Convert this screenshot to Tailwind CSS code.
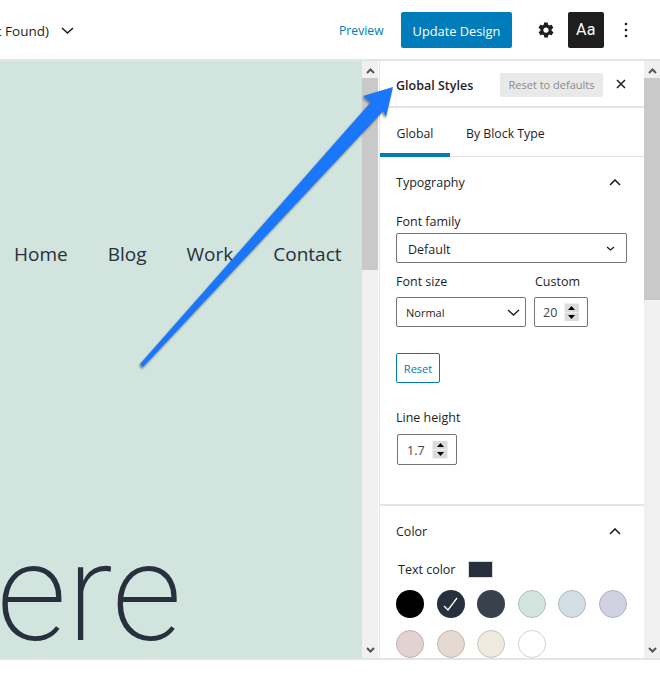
<!DOCTYPE html>
<html lang="en">
<head>
<meta charset="utf-8">
<script src="https://cdn.jsdelivr.net/npm/@tailwindcss/browser@4"></script>
</head>
<body class="bg-white">
<div class="relative w-[660px] h-[684px] overflow-hidden bg-white text-[#1e1e1e] font-['Open_Sans','Noto_Sans',sans-serif] text-[13px]">
  <header class="h-[61px] flex items-center border-b-2 border-[#e2e4e7]">
    <div class="w-[49px] overflow-hidden flex justify-end whitespace-nowrap text-[13.5px] pt-[4px]"><span>Not Found)</span></div>
    <svg class="ml-[12px] mt-[2px]" width="13" height="8" viewBox="0 0 13 8" fill="none" stroke="#1e1e1e" stroke-width="1.6"><path d="M1 1l5.500 5L12 1"/></svg>
    <span class="ml-[265px] text-[#007cba] text-[12.2px] w-[62px] pt-[3px]">Preview</span>
    <div class="w-[111px] h-9 bg-[#007cba] rounded-[2px] text-white text-[12.8px] flex items-center justify-center pt-[4px]">Update Design</div>
    <svg class="ml-[25px]" width="18" height="18" viewBox="0 0 24 24" fill="#1e1e1e"><path fill-rule="evenodd" d="M19.4 13c.1-.3.1-.7.1-1s0-.7-.1-1l2.100-1.600c.2-.2.2-.4.1-.6l-2-3.500c-.1-.2-.4-.3-.6-.2l-2.500 1c-.5-.4-1.100-.7-1.700-1l-.4-2.600c0-.3-.2-.5-.5-.5h-4c-.3 0-.5.2-.5.4l-.4 2.700c-.6.2-1.200.6-1.700 1l-2.500-1c-.2-.1-.5 0-.6.2l-2 3.500c-.1.2-.1.5.1.6L4.600 11c-.1.3-.1.7-.1 1s0 .7.1 1l-2.100 1.600c-.2.2-.2.4-.1.6l2 3.500c.1.2.4.3.6.2l2.500-1c.5.4 1.100.7 1.700 1l.4 2.600c0 .3.2.5.5.5h4c.3 0 .5-.2.5-.4l.4-2.700c.6-.2 1.200-.6 1.700-1l2.500 1c.2.1.5 0 .6-.2l2-3.500c.1-.2.1-.5-.1-.6L19.400 13zM12 15.500a3.500 3.500 0 1 1 0-7 3.500 3.500 0 0 1 0 7z"/></svg>
    <div class="ml-[13px] w-9 h-9 bg-[#1e1e1e] rounded-[2px] text-white flex items-center justify-center text-[16px] font-normal tracking-[0.5px] font-['Roboto',sans-serif]">Aa</div>
    <svg class="ml-[20px]" width="4" height="16" viewBox="0 0 4 16" fill="#1e1e1e"><circle cx="2" cy="2" r="1.300"/><circle cx="2" cy="8" r="1.300"/><circle cx="2" cy="14" r="1.300"/></svg>
  </header>

  <main class="h-[599px] flex border-b-2 border-[#e2e4e7]">
    <section class="w-[362px] bg-[#d1e4dd] overflow-hidden flex flex-col">
      <nav class="mt-[179px] ml-[14px] flex gap-[40px] text-[19px] text-[#28303d] whitespace-nowrap h-[28px] items-center">
        <span>Home</span><span>Blog</span><span>Work</span><span>Contact</span>
      </nav>
      <div class="mt-[252px] flex justify-end w-[182px] overflow-hidden text-[138px] leading-[146px] font-extralight font-['Roboto',sans-serif] text-[#28303d] whitespace-nowrap"><span>here</span></div>
    </section>

    <div class="w-4 flex flex-col bg-[#f0f0f0]">
      <div class="h-[17px] flex items-center justify-center pt-[2px]"><svg width="9" height="6" viewBox="0 0 9 6" fill="none" stroke="#555" stroke-width="2"><path d="M1 5l3.500-3.500L8 5"/></svg></div>
      <div class="h-[192px] bg-[#c9c9c9]"></div>
      <div class="flex-1 flex items-end justify-center pb-[5px]"><svg width="9" height="6" viewBox="0 0 9 6" fill="none" stroke="#555" stroke-width="2"><path d="M1 1l3.500 3.500L8 1"/></svg></div>
    </div>

    <aside class="ml-[1px] w-[265px] border-l border-[#e2e4e7] overflow-hidden">
      <div class="h-[47px] border-b-2 border-[#e2e4e7] flex items-center pl-[16px] pt-[2px]">
        <span class="font-[550] text-[12.5px] w-[104px] pt-[3px]">Global Styles</span>
        <span class="w-[103px] h-6 bg-[#e9e9e9] rounded-[2px] text-[#8a8a8a] text-[11px] flex items-center justify-center pt-[1px]">Reset to defaults</span>
        <svg class="ml-[13px] -mt-[1px]" width="10" height="10" viewBox="0 0 10 10" fill="none" stroke="#1e1e1e" stroke-width="1.500"><path d="M1 1l8 8M9 1l-8 8"/></svg>
      </div>
      <div class="h-[49px] border-b border-[#e2e4e7] flex text-[12.3px]">
        <div class="w-[70px] h-[49px] border-b-[4px] border-[#007cba] flex items-center justify-center pt-[7px]">Global</div>
        <div class="ml-[16px] h-[49px] flex items-center pt-[3px]">By Block Type</div>
      </div>

      <div class="h-[349px] border-b-2 border-[#e2e4e7] pl-[16px] flex flex-col">
        <div class="h-[50px] flex items-center justify-between pr-[23px] text-[12.5px]">
          <span class="pt-[3px]">Typography</span>
          <svg width="12" height="7" viewBox="0 0 12 7" fill="none" stroke="#1e1e1e" stroke-width="1.600"><path d="M1 6l5-5 5 5"/></svg>
        </div>
        <label class="mt-[6px] h-[18px] leading-[18px] text-[12.5px]">Font family</label>
        <div class="mt-[2px] w-[231px] h-[30px] border border-[#757575] rounded-[2px] flex items-center justify-between pl-[11px] pr-[11px] text-[12.5px]">
          <span class="pt-[4px]">Default</span>
          <svg width="9" height="5" viewBox="0 0 9 5" fill="none" stroke="#1e1e1e" stroke-width="1.300"><path d="M1 1l3.500 3L8 1"/></svg>
        </div>
        <div class="mt-[10px] flex h-[18px] leading-[18px] text-[12.5px]">
          <span class="w-[139px]">Font size</span><span>Custom</span>
        </div>
        <div class="mt-[6px] flex">
          <div class="w-[130px] h-[30px] border border-[#757575] rounded-[2px] flex items-center justify-between pl-[9px] pr-[5px] text-[11px] font-medium">
            <span class="pt-[2px]">Normal</span>
            <svg width="13" height="7" viewBox="0 0 13 7" fill="none" stroke="#1e1e1e" stroke-width="1.400"><path d="M1 1l5.500 5L12 1"/></svg>
          </div>
          <div class="ml-[8px] w-[54px] h-[30px] border border-[#757575] rounded-[2px] flex items-center pl-[8px] text-[12.5px] text-[#444]">
            <span class="w-[21px] pt-[2px]">20</span>
            <div class="w-[15px] h-[18px] bg-[#f0f0f0] flex flex-col gap-[1px] items-center justify-center">
              <div class="w-[14px] h-[8px] bg-[#dcdcdc] flex items-center justify-center"><svg width="7" height="4" viewBox="0 0 7 4"><path d="M3.500 0L7 4H0z"/></svg></div>
              <div class="w-[14px] h-[8px] bg-[#dcdcdc] flex items-center justify-center"><svg width="7" height="4" viewBox="0 0 7 4"><path d="M0 0h7L3.500 4z"/></svg></div>
            </div>
          </div>
        </div>
        <div class="mt-[26px] w-[44px] h-[30px] border border-[#007cba] rounded-[2px] text-[#007cba] text-[11px] flex items-center justify-center pt-[2px]">Reset</div>
        <label class="mt-[26px] h-[18px] leading-[18px] text-[12.5px]">Line height</label>
        <div class="mt-[7px] ml-[1px] w-[60px] h-[31px] border border-[#757575] rounded-[2px] flex items-center pl-[9px] text-[12.5px] text-[#444]">
          <span class="w-[25px] pt-[3px]">1.7</span>
          <div class="w-[16px] h-[18px] bg-[#f0f0f0] flex flex-col gap-[1px] items-center justify-center">
            <div class="w-[14px] h-[8px] bg-[#dcdcdc] flex items-center justify-center"><svg width="7" height="4" viewBox="0 0 7 4"><path d="M3.500 0L7 4H0z"/></svg></div>
            <div class="w-[14px] h-[8px] bg-[#dcdcdc] flex items-center justify-center"><svg width="7" height="4" viewBox="0 0 7 4"><path d="M0 0h7L3.500 4z"/></svg></div>
          </div>
        </div>
      </div>

      <div class="pl-[16px]">
        <div class="h-[50px] flex items-center justify-between pr-[23px] text-[12.5px]">
          <span class="pt-[2px]">Color</span>
          <svg width="12" height="7" viewBox="0 0 12 7" fill="none" stroke="#1e1e1e" stroke-width="1.600"><path d="M1 6l5-5 5 5"/></svg>
        </div>
        <div class="mt-[5px] ml-[2px] h-[16px] flex items-center text-[12.5px]">
          <span class="w-[70px] pt-[2px]">Text color</span>
          <span class="w-[25px] h-[17px] bg-[#28303d] border border-[#d8d8d8]"></span>
        </div>
        <div class="mt-[13px] grid grid-cols-[repeat(6,28px)] gap-x-[12.500px] gap-y-[12px]">
          <span class="w-7 h-7 rounded-full bg-black"></span>
          <span class="w-7 h-7 rounded-full bg-[#28303d] flex items-center justify-center"><svg width="16" height="15" viewBox="0 0 16 15" fill="none" stroke="#fff" stroke-width="1.300"><path d="M1 9l4 4L14 1"/></svg></span>
          <span class="w-7 h-7 rounded-full bg-[#39414d]"></span>
          <span class="w-7 h-7 rounded-full bg-[#d1e4dd] border border-[#b0c0ba]"></span>
          <span class="w-7 h-7 rounded-full bg-[#d1dfe4] border border-[#b0bcc0]"></span>
          <span class="w-7 h-7 rounded-full bg-[#d1d1e4] border border-[#b0b0c0]"></span>
          <span class="w-7 h-7 rounded-full bg-[#e4d1d1] border border-[#c0b0b0]"></span>
          <span class="w-7 h-7 rounded-full bg-[#e4dad1] border border-[#c0b8b0]"></span>
          <span class="w-7 h-7 rounded-full bg-[#eeeadd] border border-[#c8c4b8]"></span>
          <span class="w-7 h-7 rounded-full bg-white border border-[#d4d4d4]"></span>
        </div>
      </div>
    </aside>

    <div class="w-4 shrink-0 flex flex-col bg-[#f0f0f0]">
      <div class="h-[17px] flex items-center justify-center pt-[2px]"><svg width="9" height="6" viewBox="0 0 9 6" fill="none" stroke="#555" stroke-width="2"><path d="M1 5l3.500-3.500L8 5"/></svg></div>
      <div class="h-[222px] bg-[#c9c9c9]"></div>
      <div class="flex-1 flex items-end justify-center pb-[5px]"><svg width="9" height="6" viewBox="0 0 9 6" fill="none" stroke="#555" stroke-width="2"><path d="M1 1l3.500 3.500L8 1"/></svg></div>
    </div>
  </main>

  <svg class="absolute left-0 top-0 pointer-events-none" width="660" height="684" viewBox="0 0 660 684">
    <path class="drop-shadow-[-1px_2px_1px_rgba(0,0,0,0.45)]" d="M140 364 L371 102 L363 96 L393 87 L386 117 L383 111 L143 367 Z" fill="#1a76fb"/>
  </svg>
</div>
</body>
</html>
